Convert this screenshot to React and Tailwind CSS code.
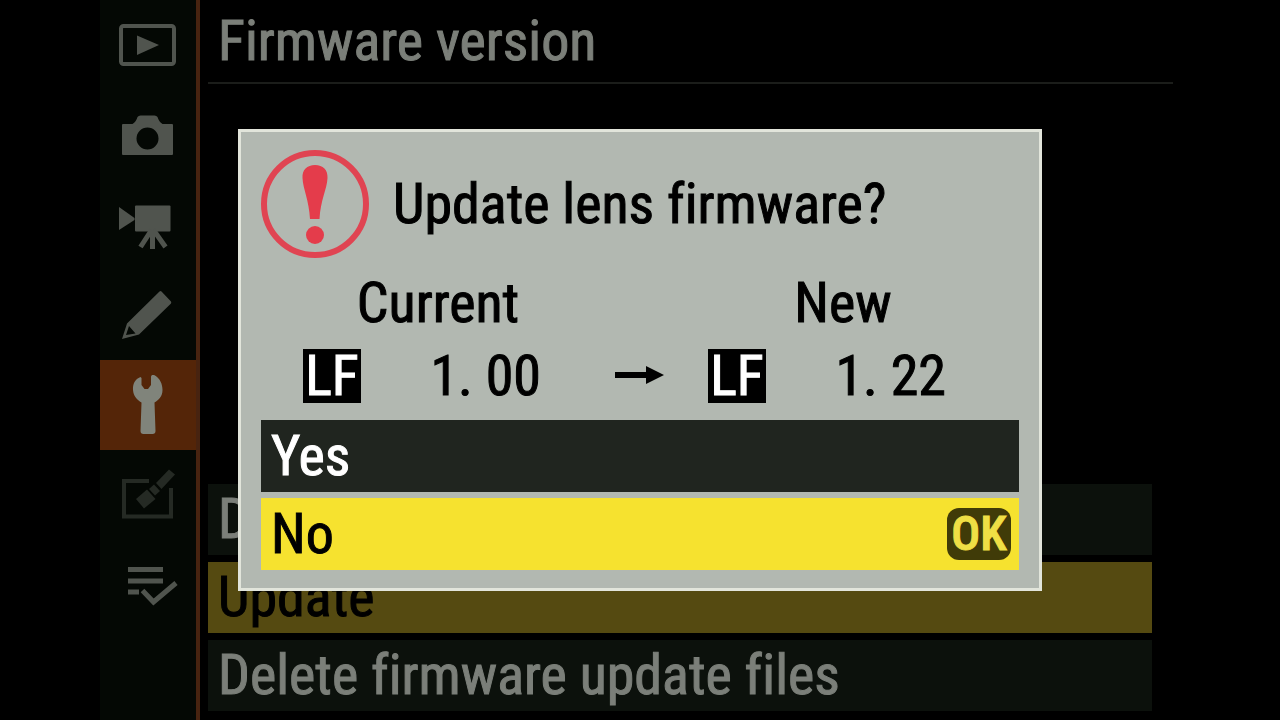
const FONT = "font-['Roboto_Condensed',Roboto,sans-serif] [font-variant-ligatures:none] [-webkit-text-stroke:1px_currentColor]";

function PlaybackIcon() {
  return (
    <svg width="60" height="60" viewBox="0 0 60 60" fill="none">
      <rect x="3" y="11" width="53" height="38" rx="2.5" stroke="currentColor" strokeWidth="4" />
      <path d="M19 20.500L41 30L19 40Z" fill="currentColor" />
    </svg>
  );
}

function CameraIcon() {
  return (
    <svg width="60" height="60" viewBox="0 0 60 60" fill="currentColor" fillRule="evenodd">
      <path d="M5 19H14.500Q18 17 19.500 12Q20.500 10.500 22.500 10.500H36.500Q38.500 10.500 39.500 12Q41 17 44.500 19H54Q55 19 55 20V49Q55 50 54 50H5Q4 50 4 49V20Q4 19 5 19ZM29.500 22.500A11 11 0 1 0 29.500 44.500A11 11 0 1 0 29.500 22.500Z" />
    </svg>
  );
}

function MovieIcon() {
  return (
    <svg width="60" height="60" viewBox="0 0 60 60" fill="currentColor">
      <path d="M1 12L16.500 23V25L1 35Z" />
      <rect x="17" y="10.500" width="35.500" height="26" rx="1" />
      <path d="M33.500 35L22.500 52M34.500 36V54M35.500 35L47.500 52" stroke="currentColor" strokeWidth="5" />
    </svg>
  );
}

function PencilIcon() {
  return (
    <svg width="60" height="60" viewBox="0 0 60 60" fill="currentColor" fillRule="evenodd">
      <path d="M41.500 6.500Q42.500 5.500 43.500 6.500L53 16.500Q53.500 17.500 53 18.500L21 49.500L4 54L9 38.500ZM11 41L8 50L17.500 48.500Z" />
    </svg>
  );
}

function WrenchIcon() {
  return (
    <svg width="60" height="66" viewBox="0 0 60 66" fill="currentColor">
      <path d="M22.500 5C17 7 14.500 12 15 18C15.500 24 19 28 23.500 30.500L22.500 59Q22.500 62 25.500 62H34.500Q37.500 62 37.500 59L36.500 30.500C41 28 44.500 24 44.500 18C44.500 12 42 6.500 37 3.500C35 2.500 33 3 33 5V13L30 17L26.500 17L23.500 13V6Z" />
    </svg>
  );
}

function RetouchIcon() {
  return (
    <svg width="60" height="60" viewBox="0 0 60 60" fill="none">
      <path d="M31 16H6V51.500H53V23" stroke="currentColor" strokeWidth="4" />
      <g fill="currentColor">
        <path d="M18 34L29 24.500L37.500 34L26 43.500Z" />
        <path d="M31 24L36 19.500L42 26L37 30.500Z" />
        <path d="M38 18L51 4.500L57 9.500L43.500 24Z" />
      </g>
    </svg>
  );
}

function MyMenuIcon() {
  return (
    <svg width="60" height="60" viewBox="0 0 60 60" fill="none" stroke="currentColor" strokeWidth="5">
      <path d="M10 14.500H45M10 26H45M10 37H21" />
      <path d="M24.500 35.500L35.500 47L58 28" />
    </svg>
  );
}

const tabs = [
  { label: "Playback menu", Icon: PlaybackIcon, style: "text-[#50544e]" },
  { label: "Photo shooting menu", Icon: CameraIcon, style: "text-[#50544e]" },
  { label: "Video recording menu", Icon: MovieIcon, style: "text-[#50544e]" },
  { label: "Custom settings menu", Icon: PencilIcon, style: "text-[#50544e]" },
  { label: "Setup menu", Icon: WrenchIcon, style: "bg-[#542508] text-[#80847b]", active: true },
  { label: "Retouch menu", Icon: RetouchIcon, style: "text-[#252a24]" },
  { label: "My menu", Icon: MyMenuIcon, style: "text-[#50544e]" },
];

const menuItems = [
  { label: "D", style: "bg-[#0c110c] text-[#7b7f79]" },
  { label: "Update", style: "bg-[#554a11] text-black" },
  { label: "Delete firmware update files", style: "bg-[#0c110c] text-[#7b7f79]" },
];

function Version({ title, value }) {
  return (
    <div className="flex w-[238px] flex-col gap-2">
      <h2 className="pl-8 text-center leading-[74px]">{title}</h2>
      <div className="flex items-center justify-between">
        <span className="h-[54px] w-[58px] bg-black text-center leading-[54px] text-white">LF</span>
        <span className="leading-[56px]">{value}</span>
      </div>
    </div>
  );
}

function Dialog() {
  return (
    <section
      role="dialog"
      aria-labelledby="dialog-title"
      className="flex w-[804px] max-w-full flex-col border-[3px] border-[#e2e5db] bg-[#b2b8b1] px-5 py-[18px] text-black"
    >
      <div className="flex items-center gap-6 pb-2">
        <svg width="108" height="108" viewBox="0 0 108 108" fill="#e43c4b" aria-hidden="true">
          <circle cx="54" cy="54" r="51" fill="none" stroke="#e04452" strokeWidth="6" />
          <path d="M54 15C46 15 41 20 41.500 28C42 39 48 50 49 69H58.500C59.500 50 66 39 66.500 28C67 20 62 15 54 15Z" />
          <circle cx="54" cy="85" r="9" />
        </svg>
        <h1 id="dialog-title" className="leading-[72px]">Update lens firmware?</h1>
      </div>
      <div className="flex items-end justify-between pr-[73px] pl-[42px]">
        <Version title="Current" value="1. 00" />
        <div className="pl-[30px]">
          <svg width="50" height="56" viewBox="0 0 50 56" role="img" aria-label="to">
            <path d="M0 24H31V18L49 27L31 36V30H0Z" />
          </svg>
        </div>
        <Version title="New" value="1. 22" />
      </div>
      <div className="flex flex-col gap-[6px] pt-4">
        <button type="button" className="flex h-[72px] items-center bg-[#20251f] px-[10px] leading-[72px] text-white">
          Yes
        </button>
        <button type="button" className="flex h-[72px] items-center justify-between bg-[#f6e22f] pr-2 pl-[10px] leading-[72px]">
          No
          <span className="h-[52px] w-16 rounded-xl bg-[#403b08] text-center text-[48px] leading-[52px] font-medium text-[#efdf45]">
            OK
          </span>
        </button>
      </div>
    </section>
  );
}

export default function App() {
  return (
    <div className={`flex min-h-screen bg-black pl-[100px] text-[56px] ${FONT}`}>
      <nav aria-label="Menus" className="flex w-[100px] shrink-0 flex-col border-r-4 border-[#472310] bg-[#040804]">
        {tabs.map(({ label, Icon, style, active }) => (
          <button
            key={label}
            type="button"
            aria-label={label}
            aria-current={active ? "page" : undefined}
            className={`flex h-[90px] items-center justify-center ${style}`}
          >
            <Icon />
          </button>
        ))}
      </nav>
      <main className="flex flex-1 flex-col justify-between pb-[9px] pl-2">
        <header className="mr-[107px] border-b-2 border-[#1b1d1a] pl-[10px] leading-[82px] text-[#7b7f79]">
          Firmware version
        </header>
        <ul className="mr-32 flex flex-col gap-[7px]">
          {menuItems.map(({ label, style }) => (
            <li key={label} className="flex">
              <button type="button" className={`h-[71px] flex-1 pl-[10px] text-left leading-[71px] ${style}`}>
                {label}
              </button>
            </li>
          ))}
        </ul>
      </main>
      <div className="fixed inset-0 flex items-center justify-center">
        <Dialog />
      </div>
    </div>
  );
}
